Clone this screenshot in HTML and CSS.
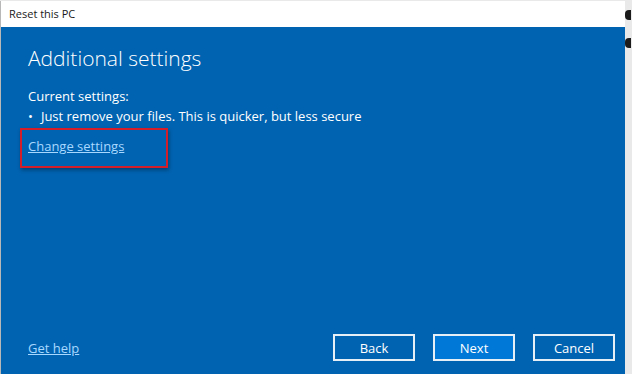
FILE: index.html
```html
<!DOCTYPE html>
<html lang="en">
<head>
    <meta charset="UTF-8">
    <title>Reset this PC</title>
    <link rel="stylesheet" href="styles.css">
</head>
<body>

<div class="window">
    <div class="title-bar">Reset this PC</div>

    <div class="content">
        <h1>Additional settings</h1>
        <p class="label">Current settings:</p>
        <ul class="settings">
            <li>Just remove your files. This is quicker, but less secure</li>
        </ul>
        <div class="highlight">
            <a href="#" class="link">Change settings</a>
        </div>
    </div>

    <div class="footer">
        <a href="#" class="link">Get help</a>
        <div class="buttons">
            <button class="btn">Back</button>
            <button class="btn primary">Next</button>
            <button class="btn">Cancel</button>
        </div>
    </div>
</div>

<div class="desktop-edge">
    <span class="glyph"></span>
    <span class="glyph"></span>
</div>

</body>
</html>
```

FILE: styles.css
```css
body {
    margin: 0;
    height: 374px;
    overflow: hidden;
    display: flex;
    background-color: #e9e9e9;
    font-family: 'Open Sans', 'Noto Sans', sans-serif;
}

.window {
    width: 625px;
    height: 373px;
    margin-top: 1px;
    display: flex;
    flex-direction: column;
    background-color: #0063b1;
    border-left: 1px solid #b8b8b8;
    box-sizing: border-box;
}

.title-bar {
    height: 26px;
    background-color: #ffffff;
    color: #1a1a1a;
    font-size: 11px;
    line-height: 26px;
    padding-left: 8px;
}

.content {
    flex: 1;
    padding: 16px 27px 0;
    color: #ffffff;
}

.content h1 {
    margin: 0 0 13px;
    font-size: 21px;
    font-weight: 300;
    line-height: 30px;
}

.label {
    margin: 0;
    font-size: 13px;
    line-height: 20px;
}

.settings {
    margin: 0;
    padding: 0;
    list-style: none;
    font-size: 13px;
    line-height: 20px;
}

.settings li::before {
    content: "\2022";
    margin-right: 8px;
}

.highlight {
    display: inline-block;
    margin: 2px 0 0 -8px;
    padding: 4px 42px 10px 6px;
    border: 2px solid #d41f2b;
    box-shadow: 1px 2px 4px rgba(0, 0, 0, 0.35);
}

.link {
    color: #a8d8ff;
    font-size: 13px;
    line-height: 18px;
    text-decoration: underline;
}

.footer {
    display: flex;
    align-items: center;
    justify-content: space-between;
    padding: 0 10px 13px 27px;
}

.buttons {
    display: flex;
    gap: 18px;
}

.btn {
    width: 82px;
    height: 27px;
    background-color: #0063b1;
    color: #ffffff;
    border: 2px solid #e6eef6;
    font-family: 'Open Sans', 'Noto Sans', sans-serif;
    font-size: 13px;
    padding: 0;
}

.btn.primary {
    background-color: #0078d7;
}

.desktop-edge {
    flex: 1;
    display: flex;
    flex-direction: column;
    gap: 18px;
    padding-top: 10px;
}

.glyph {
    width: 6px;
    height: 10px;
    background-color: #1b1b1b;
    border-radius: 4px 0 0 4px;
}
```
